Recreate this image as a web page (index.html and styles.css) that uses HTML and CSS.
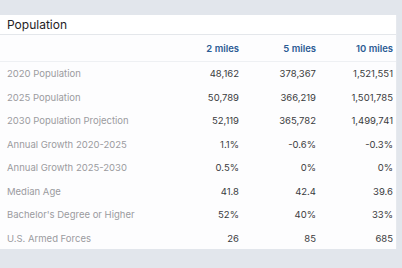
FILE: index.html
```html
<!DOCTYPE html>
<html>
<head>
<meta charset="utf-8">
<link rel="stylesheet" href="styles.css">
</head>
<body>
<div class="card">
  <div class="card-title">Population</div>
  <table class="data">
    <thead>
      <tr><th class="label"></th><th>2 miles</th><th>5 miles</th><th>10 miles</th></tr>
    </thead>
    <tbody>
      <tr><td class="label">2020 Population</td><td>48,162</td><td>378,367</td><td>1,521,551</td></tr>
      <tr><td class="label">2025 Population</td><td>50,789</td><td>366,219</td><td>1,501,785</td></tr>
      <tr><td class="label">2030 Population Projection</td><td>52,119</td><td>365,782</td><td>1,499,741</td></tr>
      <tr><td class="label">Annual Growth 2020-2025</td><td>1.1%</td><td>-0.6%</td><td>-0.3%</td></tr>
      <tr><td class="label">Annual Growth 2025-2030</td><td>0.5%</td><td>0%</td><td>0%</td></tr>
      <tr><td class="label">Median Age</td><td>41.8</td><td>42.4</td><td>39.6</td></tr>
      <tr><td class="label">Bachelor's Degree or Higher</td><td>52%</td><td>40%</td><td>33%</td></tr>
      <tr><td class="label">U.S. Armed Forces</td><td>26</td><td>85</td><td>685</td></tr>
    </tbody>
  </table>
</div>
</body>
</html>
```
FILE: styles.css
```css
html, body {
  margin: 0;
  padding: 0;
  background: #e2e6ec;
  font-family: Inter, "Noto Sans", sans-serif;
}
.card {
  margin-top: 15px;
  width: 397px;
  height: 234px;
  background: #fdfdfe;
  border-right: 1px solid #e6e9ee;
  box-sizing: border-box;
  overflow: hidden;
}
.card-title {
  height: 19px;
  line-height: 19px;
  padding-left: 7px;
  font-size: 12px;
  color: #1f2226;
  background: #ffffff;
  border-bottom: 1px solid #e4e7eb;
}
.data {
  width: 100%;
  border-collapse: collapse;
  font-size: 9.5px;
}
.data th {
  height: 26px;
  padding: 0 3px 0 0;
  text-align: right;
  font-weight: 600;
  color: #2b5b94;
  border-bottom: 1px solid #eef0f3;
  width: 74px;
}
.data th.label {
  width: auto;
}
.data td {
  height: 23.5px;
  padding: 0 3px 0 0;
  text-align: right;
  color: #3a3b3d;
}
.data td.label {
  text-align: left;
  padding-left: 7px;
  color: #9b9b9e;
}
```
